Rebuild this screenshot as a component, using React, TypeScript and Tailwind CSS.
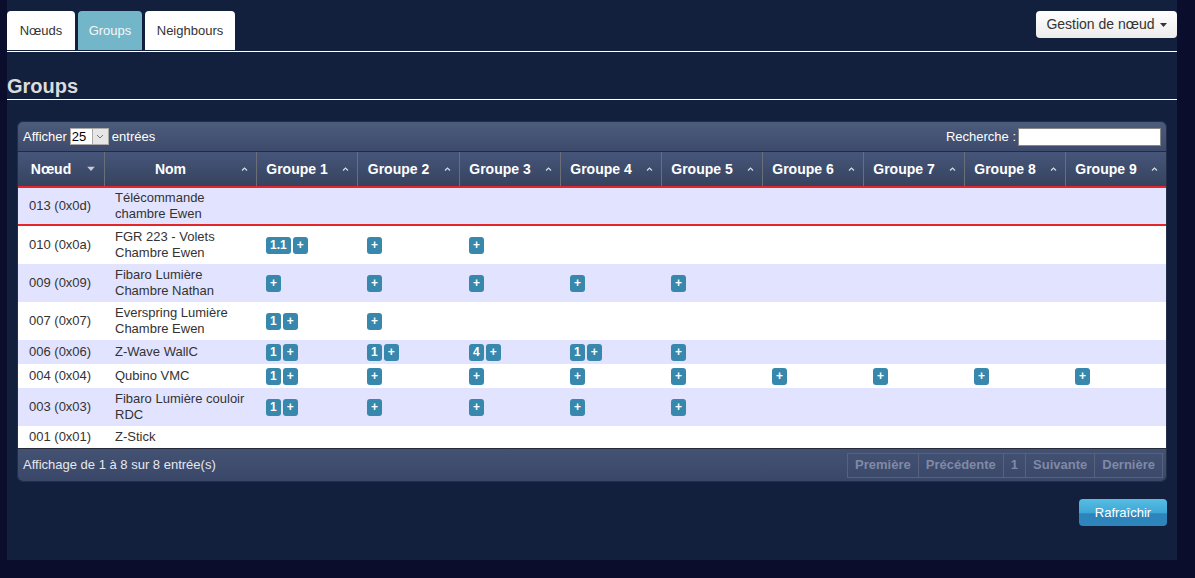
import React from "react";

type Row = {
  id: string;
  name: string[];
  groups: (string[] | null)[];
  selected?: boolean;
};

const rows: Row[] = [
  { id: "013 (0x0d)", name: ["Télécommande", "chambre Ewen"], groups: [], selected: true },
  { id: "010 (0x0a)", name: ["FGR 223 - Volets", "Chambre Ewen"], groups: [["1.1", "+"], ["+"], ["+"]] },
  { id: "009 (0x09)", name: ["Fibaro Lumière", "Chambre Nathan"], groups: [["+"], ["+"], ["+"], ["+"], ["+"]] },
  { id: "007 (0x07)", name: ["Everspring Lumière", "Chambre Ewen"], groups: [["1", "+"], ["+"]] },
  { id: "006 (0x06)", name: ["Z-Wave WallC"], groups: [["1", "+"], ["1", "+"], ["4", "+"], ["1", "+"], ["+"]] },
  { id: "004 (0x04)", name: ["Qubino VMC"], groups: [["1", "+"], ["+"], ["+"], ["+"], ["+"], ["+"], ["+"], ["+"], ["+"]] },
  { id: "003 (0x03)", name: ["Fibaro Lumière couloir", "RDC"], groups: [["1", "+"], ["+"], ["+"], ["+"], ["+"]] },
  { id: "001 (0x01)", name: ["Z-Stick"], groups: [] },
];

// column widths, summing to the 1148px inside the wrapper border
const groupWidths = ["w-[101px]", "w-[102px]", "w-[101px]", "w-[101px]", "w-[101px]", "w-[101px]", "w-[101px]", "w-[101px]", "w-[101px]"];

function SortUp() {
  return (
    <svg width="7" height="5" viewBox="0 0 7 5" className="absolute right-[8px] top-1/2 -translate-y-1/2">
      <path d="M1 4 L3.5 1.5 L6 4" fill="none" stroke="#d8dbe4" strokeWidth="1.2" />
    </svg>
  );
}

function SortDown() {
  return (
    <svg width="8" height="5" viewBox="0 0 8 5" className="absolute right-[9px] top-1/2 -translate-y-1/2">
      <path d="M0 0 L8 0 L4 4.5 Z" fill="#c8ccd6" />
    </svg>
  );
}

function Badge({ label }: { label: string }) {
  return (
    <span className="inline-flex h-[17px] items-center justify-center rounded-[3px] bg-[#3887ad] px-[4px] text-[12px] font-bold leading-none text-white">
      {label}
    </span>
  );
}

export default function App() {
  return (
    <div className="min-h-[578px] w-full bg-[#0b0d2c] font-['Liberation_Sans',Arial,sans-serif]">
      <div className="ml-[7px] flex h-[560px] w-[1170px] flex-col bg-[#12203e]">
        {/* Tabs + node menu */}
        <div className="flex items-start justify-between pt-[11px]">
          <div className="flex gap-[3px]">
            <div className="flex h-[39px] w-[68px] items-center justify-center rounded-t-[4px] bg-white text-[13px] text-[#333]">Nœuds</div>
            <div className="flex h-[39px] w-[64px] items-center justify-center rounded-t-[4px] bg-[#73b6c9] text-[13px] text-[#f4f8fa]">Groups</div>
            <div className="flex h-[39px] w-[90px] items-center justify-center rounded-t-[4px] bg-white text-[13px] text-[#333]">Neighbours</div>
          </div>
          <button className="flex h-[27px] w-[141px] items-center justify-center gap-[5px] rounded-[4px] bg-gradient-to-b from-white to-[#ececec] text-[14px] text-[#333]">
            Gestion de nœud
            <svg width="7" height="4" viewBox="0 0 7 4">
              <path d="M0 0 L7 0 L3.5 4 Z" fill="#333" />
            </svg>
          </button>
        </div>
        <div className="mt-[1px] h-[1px] bg-white" />

        {/* Heading */}
        <h2 className="mt-[21px] h-[27px] border-b border-white text-[20px] font-bold leading-[27px] text-[#dcdcdc]">Groups</h2>

        {/* Table wrapper */}
        <div className="mx-[10px] mt-[21px] rounded-[5px] border border-[#242e48]">
          <div className="flex h-[30px] items-center justify-between rounded-t-[5px] border-b border-[#262a3a] bg-gradient-to-b from-[#4c5c7d] to-[#3d4a6b] px-[5px] text-[13px] text-white">
            <div className="flex items-center gap-[3px]">
              <span>Afficher</span>
              <span className="flex h-[17px] items-stretch border border-[#aaa] bg-white">
                <span className="flex w-[21px] items-center pl-[1px] text-[13px] text-black">25</span>
                <span className="flex w-[16px] items-center justify-center border-l border-[#aaa] bg-[#e6e6e6]">
                  <svg width="8" height="5" viewBox="0 0 8 5">
                    <path d="M1 1 L4 4 L7 1" fill="none" stroke="#777" strokeWidth="1" />
                  </svg>
                </span>
              </span>
              <span>entrées</span>
            </div>
            <div className="flex items-center gap-[2px]">
              <span>Recherche :</span>
              <span className="h-[18px] w-[143px] border border-[#888] bg-white" />
            </div>
          </div>

          <table className="w-[1148px] table-fixed border-separate border-spacing-0 text-[13px] leading-[16px]">
            <thead>
              <tr className="bg-gradient-to-b from-[#46567a] to-[#36435f]">
                <th className="relative h-[34px] w-[86px] pl-[6px] pr-[26px] text-center text-[14px] font-bold text-white">
                  Nœud
                  <SortDown />
                </th>
                <th className="relative w-[152px] border-l border-[#6a6e78] pl-[6px] pr-[26px] text-center text-[14px] font-bold text-white">
                  Nom
                  <SortUp />
                </th>
                {groupWidths.map((w, i) => (
                  <th
                    key={i}
                    className={`relative ${w} border-l border-[#6a6e78] pl-[6px] pr-[26px] text-center text-[14px] font-bold text-white`}
                  >
                    Groupe {i + 1}
                    <SortUp />
                  </th>
                ))}
              </tr>
            </thead>
            <tbody>
              {rows.map((row, ri) => {
                const bg = ri % 2 === 0 ? "bg-[#e2e3ff]" : "bg-white";
                const sel = row.selected ? "border-y-2 border-[#e3262a] py-[2px]" : "py-[3px]";
                return (
                  <tr key={row.id} className={bg}>
                    <td className={`${sel} pl-[11px] align-middle text-[#333]`}>{row.id}</td>
                    <td className={`${sel} pl-[11px] align-middle text-[#333]`}>
                      {row.name.map((n, k) => (
                        <div key={k}>{n}</div>
                      ))}
                    </td>
                    {groupWidths.map((_, gi) => {
                      const g = row.groups[gi];
                      return (
                        <td key={gi} className={`${sel} pl-[10px] align-middle`}>
                          {g ? (
                            <div className="flex h-[18px] items-center gap-[2px]">
                              {g.map((b, bi) => (
                                <Badge key={bi} label={b} />
                              ))}
                            </div>
                          ) : null}
                        </td>
                      );
                    })}
                  </tr>
                );
              })}
            </tbody>
          </table>

          <div className="flex h-[33px] items-center justify-between rounded-b-[5px] border-t border-[#262a3a] bg-gradient-to-b from-[#435273] to-[#3a4768] pl-[5px] pr-[3px] text-[13px]">
            <span className="text-[#e6e8ee]">Affichage de 1 à 8 sur 8 entrée(s)</span>
            <div className="flex h-[25px] border border-[#56627f] text-[13px] font-bold text-[#7f8aa6]">
              <span className="flex items-center px-[7px]">Première</span>
              <span className="flex items-center border-l border-[#56627f] px-[7px]">Précédente</span>
              <span className="flex items-center border-l border-[#56627f] px-[7px]">1</span>
              <span className="flex items-center border-l border-[#56627f] px-[7px]">Suivante</span>
              <span className="flex items-center border-l border-[#56627f] px-[7px]">Dernière</span>
            </div>
          </div>
        </div>

        <div className="mr-[10px] mt-[17px] flex justify-end">
          <button className="h-[27px] w-[88px] rounded-[4px] bg-[linear-gradient(to_bottom,#56bde3_0%,#3fa7d6_50%,#2d84bb_55%,#2d85bc_100%)] text-[13px] text-white">
            Rafraîchir
          </button>
        </div>
      </div>
    </div>
  );
}
